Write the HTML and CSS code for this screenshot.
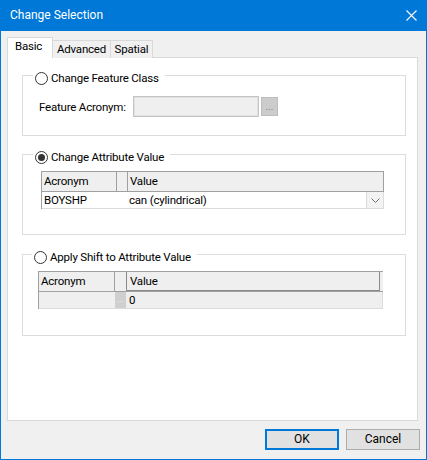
FILE: index.html
```html
<!DOCTYPE html>
<html>
<head>
<meta charset="utf-8">
<link rel="stylesheet" href="styles.css">
</head>
<body>
<div class="window">
  <div class="titlebar">
    <span class="title">Change Selection</span>
    <svg class="close" width="11" height="11" viewBox="0 0 11 11"><path d="M0.5 0.5 L10.5 10.5 M10.5 0.5 L0.5 10.5" stroke="#fff" stroke-width="1.1" fill="none"/></svg>
  </div>
  <div class="client">
    <div class="tabs">
      <div class="tab active">Basic</div>
      <div class="tab tab-adv">Advanced</div>
      <div class="tab tab-spa">Spatial</div>
    </div>
    <div class="panel">
      <fieldset class="group g1">
        <legend><span class="radio"></span><span>Change Feature Class</span></legend>
        <div class="field-row">
          <span class="field-label">Feature Acronym:</span>
          <span class="textbox"></span>
          <span class="browse">...</span>
        </div>
      </fieldset>
      <fieldset class="group g2">
        <legend><span class="radio checked"></span><span>Change Attribute Value</span></legend>
        <div class="grid grid-a">
          <div class="ghead">
            <div class="hc c1">Acronym</div>
            <div class="hc c2"></div>
            <div class="hc c3">Value</div>
          </div>
          <div class="grow">
            <div class="rc c1">BOYSHP</div>
            <div class="rc c2"></div>
            <div class="rc c3">can (cylindrical)</div>
            <div class="dropbtn"><svg width="9" height="5" viewBox="0 0 9 5"><path d="M0.5 0.5 L4.5 4.5 L8.5 0.5" stroke="#707070" fill="none"/></svg></div>
          </div>
        </div>
      </fieldset>
      <fieldset class="group g3">
        <legend><span class="radio"></span><span>Apply Shift to Attribute Value</span></legend>
        <div class="grid grid-b">
          <div class="ghead">
            <div class="hc c1">Acronym</div>
            <div class="hc c2"></div>
            <div class="hc c3 focused">Value</div>
          </div>
          <div class="grow shaded">
            <div class="rc c1"></div>
            <div class="rc c2"><span class="cellbtn">...</span></div>
            <div class="rc c3">0</div>
          </div>
        </div>
      </fieldset>
    </div>
    <div class="buttons">
      <button class="btn default">OK</button>
      <button class="btn">Cancel</button>
    </div>
  </div>
</div>
</body>
</html>
```
FILE: styles.css
```css
html, body {
  margin: 0;
  padding: 0;
}
body {
  font-family: "Segoe UI", Roboto, "Noto Sans", sans-serif;
  font-size: 11.5px;
  letter-spacing: -0.2px;
  color: #000;
  background: #fff;
}
.window {
  width: 427px;
  height: 460px;
  box-sizing: border-box;
  border: 1px solid #0078d7;
  border-top: 0;
  background: #f0f0f0;
  display: flex;
  flex-direction: column;
}
.titlebar {
  height: 31px;
  flex: none;
  background: #0078d7;
  color: #fff;
  display: flex;
  align-items: center;
  padding: 0 9px 0 9px;
  box-sizing: border-box;
}
.title {
  flex: 1;
  line-height: 16px;
  margin-top: -1px;
  font-size: 12px;
  letter-spacing: 0;
}
.close {
  margin-top: -1px;
}
.client {
  flex: 1;
  display: flex;
  flex-direction: column;
  padding: 7px 6px 8px 6px;
}
.tabs {
  display: flex;
  align-items: flex-end;
  height: 20px;
  margin-bottom: -1px;
  position: relative;
  z-index: 1;
}
.tab {
  box-sizing: border-box;
  height: 18px;
  border: 1px solid #d9d9d9;
  border-bottom: 0;
  border-left: 0;
  background: #f0f0f0;
  text-align: center;
  line-height: 16px;
  white-space: nowrap;
}
.tab.active {
  height: 21px;
  width: 46px;
  border-left: 1px solid #d9d9d9;
  background: #fff;
  text-align: left;
  padding-left: 7px;
  line-height: 16px;
}
.tab-adv { width: 58px; }
.tab-spa { width: 42px; }
.panel {
  box-sizing: border-box;
  height: 364px;
  margin-right: 2px;
  background: #fff;
  border: 1px solid #d9d9d9;
  padding: 7px 11px 0 14px;
  display: flex;
  flex-direction: column;
}
.group {
  margin: 0;
  border: 1px solid #dcdcdc;
  padding: 0;
  min-width: 0;
}
.group legend {
  padding: 6px 6px 0 2px;
  height: 21px;
  box-sizing: border-box;
  display: flex;
  align-items: center;
  line-height: 15px;
  white-space: nowrap;
}
.g1 legend { margin-left: -6px; }
.g2 legend { margin-left: -8px; }
.g3 legend { margin-left: -6px; }
.radio {
  width: 13px;
  height: 13px;
  box-sizing: border-box;
  border: 1px solid #333;
  border-radius: 50%;
  background: #fff;
  margin-right: 3px;
  display: inline-flex;
  align-items: center;
  justify-content: center;
}
.radio.checked::after {
  content: "";
  width: 7px;
  height: 7px;
  border-radius: 50%;
  background: #333;
}
.g1 {
  padding: 10px 0 18px 16px;
}
.g2 {
  margin-top: 8px;
  padding: 6px 0 25px 18px;
}
.g3 {
  margin-top: 9px;
  padding: 6px 0 26px 15px;
}
.field-row {
  display: flex;
  align-items: center;
  height: 21px;
}
.field-label {
  width: 94px;
  flex: none;
  white-space: nowrap;
}
.textbox {
  width: 126px;
  height: 21px;
  box-sizing: border-box;
  border: 1px solid #c4c4c4;
  box-shadow: inset 0 0 0 1px #e2e2e2;
  background: #efefef;
  flex: none;
}
.browse {
  margin-left: 2px;
  width: 17px;
  height: 19px;
  box-sizing: border-box;
  border: 1px solid #bdbdbd;
  background: #cccccc;
  color: #8f7f96;
  font-size: 10px;
  line-height: 18px;
  text-align: center;
  flex: none;
  letter-spacing: 0;
}
.grid {
  box-sizing: border-box;
  border-left: 1px solid #a0a0a0;
  border-top: 1px solid #a0a0a0;
}
.grid-a { width: 343px; }
.grid-b { width: 345px; }
.ghead {
  display: flex;
  height: 20px;
  box-sizing: border-box;
  border-bottom: 1px solid #a0a0a0;
  background: #efefef;
}
.hc {
  box-sizing: border-box;
  border-right: 1px solid #a0a0a0;
  padding-left: 2px;
  line-height: 18px;
  height: 19px;
  white-space: nowrap;
}
.grid-a .c1 { width: 75px; flex: none; }
.grid-a .c2 { width: 11px; flex: none; }
.grid-b .c1 { width: 76px; flex: none; }
.grid-b .c2 { width: 12px; flex: none; }
.c3 { flex: 1; }
.grid-a .hc.c3 { border-right: 1px solid #a0a0a0; }
.hc.focused {
  border: 1px solid #8a8a8a;
  border-top: 0;
  margin-left: -1px;
  padding-left: 3px;
  margin-right: 3px;
}
.grow {
  display: flex;
  height: 17px;
  box-sizing: border-box;
  border-right: 1px solid #dcdcdc;
  border-bottom: 1px solid #dcdcdc;
  background: #fff;
  overflow: hidden;
}
.grow.shaded {
  background: #efefef;
}
.rc {
  box-sizing: border-box;
  padding-left: 2px;
  line-height: 16px;
  height: 16px;
  white-space: nowrap;
}
.rc.c3 { padding-left: 1px; }
.grid-b .rc.c3 { padding-left: 2px; }
.rc.c2 { padding-left: 0; }
.dropbtn {
  width: 17px;
  flex: none;
  height: 16px;
  box-sizing: border-box;
  border-left: 1px solid #dcdcdc;
  background: #f3f3f3;
  display: flex;
  align-items: center;
  justify-content: center;
}
.cellbtn {
  display: block;
  width: 11px;
  height: 16px;
  background: #cfcfcf;
  color: #f4f4f4;
  font-size: 9px;
  line-height: 14px;
  text-align: center;
  letter-spacing: 0;
}
.buttons {
  display: flex;
  justify-content: flex-end;
  gap: 7px;
  margin-top: 8px;
}
.btn {
  width: 74px;
  height: 21px;
  box-sizing: border-box;
  border: 1px solid #adadad;
  background: #e1e1e1;
  font-family: inherit;
  font-size: 12px;
  letter-spacing: 0;
  color: #000;
  padding: 0;
  margin: 0;
  line-height: 17px;
}
.btn.default {
  border: 2px solid #0078d7;
}
```
